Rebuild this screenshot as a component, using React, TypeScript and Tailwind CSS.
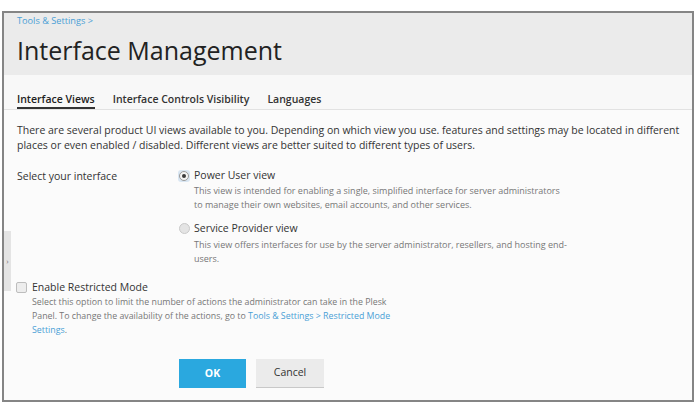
import React from "react";

const font = { fontFamily: '"Open Sans", "Liberation Sans", sans-serif' };

function Radio({ checked }: { checked?: boolean }) {
  return checked ? (
    <span className="flex h-[12px] w-[12px] items-center justify-center rounded-[3px] bg-[#d9e6f2]">
      <span className="flex h-[10px] w-[10px] items-center justify-center rounded-full border border-[#9a9a9a] bg-[#f4f4f4]">
        <span className="h-[4px] w-[4px] rounded-full bg-[#3a3a3a]" />
      </span>
    </span>
  ) : (
    <span className="flex h-[12px] w-[12px] items-center justify-center">
      <span className="h-[11px] w-[11px] rounded-full border border-[#c9c9c9] bg-[#e4e4e4]" />
    </span>
  );
}

export default function App() {
  return (
    <div className="h-[409px] w-[700px] bg-white pl-[2px] pt-[11px]" style={font}>
      <div className="relative flex h-[391px] w-[692px] flex-col border-2 border-[#858585] bg-[#fbfbfb]">
        <div className="h-[62px] bg-[#ebebeb] px-[13px] pt-[1px]">
          <div className="text-[9.2px] leading-[14px] text-[#4a9fd6]">Tools &amp; Settings &gt;</div>
          <h1 className="mt-[7px] text-[25px] leading-[30px] text-[#222]">Interface Management</h1>
        </div>
        <div className="flex h-[35px] items-end gap-[18px] border-b border-[#e2e2e2] bg-[#f8f8f8] px-[13px]">
          <div className="border-b-2 border-[#333] pb-[1px] text-[10.5px] leading-[14px] font-semibold text-[#222]">Interface Views</div>
          <div className="pb-[3px] text-[10.5px] leading-[14px] font-semibold text-[#333]">Interface Controls Visibility</div>
          <div className="pb-[3px] text-[10.5px] leading-[14px] font-semibold text-[#333]">Languages</div>
        </div>
        <div className="pl-[13px] pr-[6px] pt-[13px]">
          <p className="text-[10.5px] leading-[15px] text-[#333]">
            There are several product UI views available to you. Depending on which view you use. features and settings may be located in different places or even enabled / disabled. Different views are better suited to different types of users.
          </p>
          <div className="mt-[15px] flex">
            <div className="w-[161px] pt-[1px] text-[10.5px] leading-[15px] text-[#333]">Select your interface</div>
            <div className="flex w-[400px] flex-col">
              <div className="flex items-center gap-[4px]">
                <Radio checked />
                <span className="text-[10.5px] leading-[15px] text-[#333]">Power User view</span>
              </div>
              <p className="mt-[1px] w-[383px] pl-[16px] text-[9px] leading-[14px] text-[#777]">
                This view is intended for enabling a single, simplified interface for server administrators to manage their own websites, email accounts, and other services.
              </p>
              <div className="mt-[9px] flex items-center gap-[4px]">
                <Radio />
                <span className="text-[10.5px] leading-[15px] text-[#333]">Service Provider view</span>
              </div>
              <p className="mt-[2px] w-[396px] pl-[16px] text-[9px] leading-[14px] text-[#777]">
                This view offers interfaces for use by the server administrator, resellers, and hosting end-users.
              </p>
            </div>
          </div>
          <div className="mt-[14px] flex items-center gap-[5px]">
            <span className="ml-[-1px] h-[11px] w-[11px] rounded-[2px] border border-[#bdbdbd] bg-[#ededed]" />
            <span className="text-[10.5px] leading-[15px] text-[#333]">Enable Restricted Mode</span>
          </div>
          <p className="w-[390px] pl-[15px] text-[8.8px] leading-[14px] text-[#777]">
            Select this option to limit the number of actions the administrator can take in the Plesk Panel. To change the availability of the actions, go to{" "}
            <a className="text-[#4a9fd6]">Tools &amp; Settings &gt; Restricted Mode Settings</a>.
          </p>
          <div className="mt-[22px] flex gap-[10px] pl-[162px]">
            <button className="h-[29px] w-[67px] bg-[#2aa8df] text-[10.5px] font-bold text-white">OK</button>
            <button className="h-[29px] w-[68px] border-b border-[#c8c8c8] bg-[#ebebeb] text-[10.5px] text-[#333]">Cancel</button>
          </div>
        </div>
        <div className="absolute left-0 top-[218px] flex h-[60px] w-[7px] items-center justify-center bg-[#e4e4e4] text-[8px] text-[#777]">›</div>
      </div>
    </div>
  );
}
